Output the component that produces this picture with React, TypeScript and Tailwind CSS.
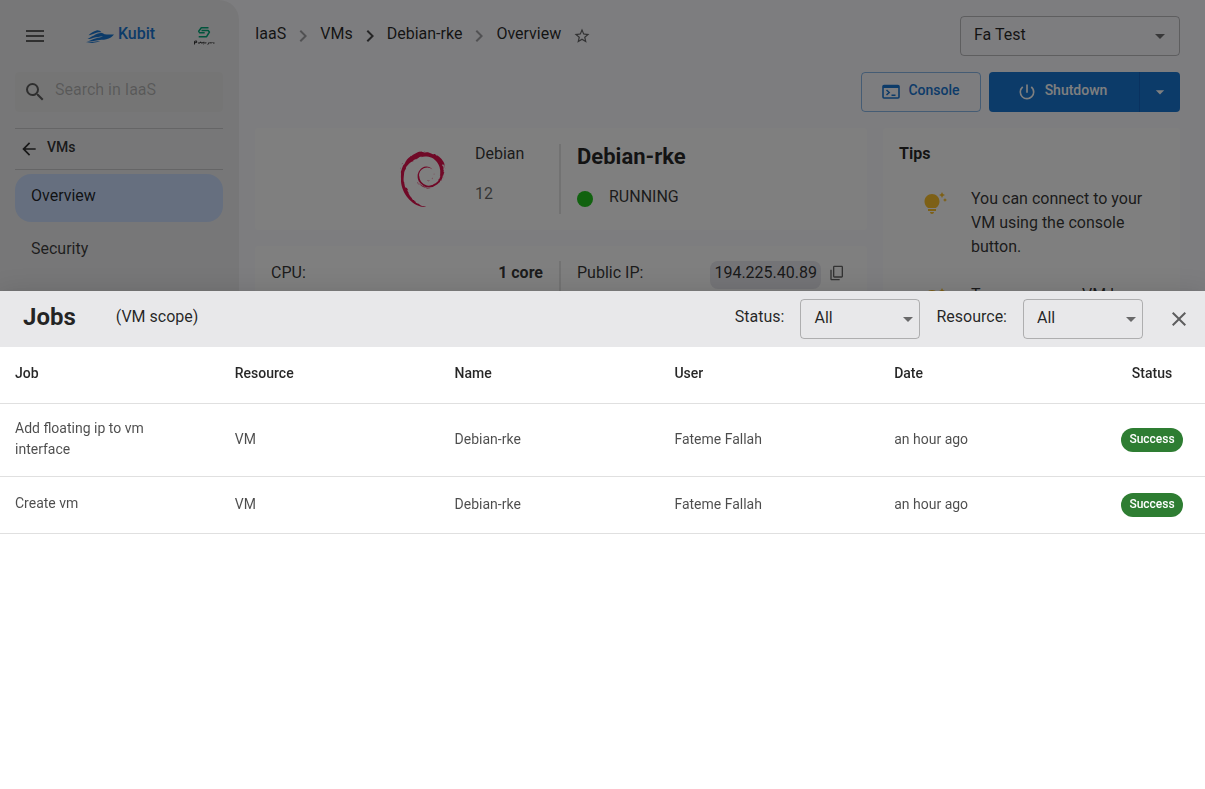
import { useState } from 'react';
import type { ReactNode } from 'react';
import clsx from 'clsx';
import {
  MdArrowBack,
  MdArrowDropDown,
  MdChevronRight,
  MdClose,
  MdContentCopy,
  MdMenu,
  MdPowerSettingsNew,
  MdSearch,
  MdStarOutline,
  MdTipsAndUpdates,
} from 'react-icons/md';
import { SiDebian } from 'react-icons/si';

const jobs = [
  { job: 'Add floating ip to vm interface', resource: 'VM', name: 'Debian-rke', user: 'Fateme Fallah', date: 'an hour ago', status: 'Success' },
  { job: 'Create vm', resource: 'VM', name: 'Debian-rke', user: 'Fateme Fallah', date: 'an hour ago', status: 'Success' },
];

const tips = [
  'You can connect to your VM using the console button.',
  'To access your VM by',
];

function BoatLogo() {
  return (
    <svg width="30" height="16" viewBox="0 0 30 16" fill="#1976d2" aria-hidden="true">
      {/* cabin */}
      <path d="M3.500 7.200C6.200 4.600 8.600 3 11.500 2.400c2.200-.3 3.900.4 5.100 1.900-2.600-.4-4.900.3-7.100 1.100-1.900.8-3.600 1.500-6 1.800z" />
      {/* hull */}
      <path d="M9 7.600c2.300-1.900 4.900-3 8-2.600 1.100.2 1.700.9 2.700 1.200 2.900.6 6.100.4 9.300.2-1.600 2.200-4.200 4-7.700 4.900-3.300.7-6 .5-8.800.9-3.700.6-6.300 1.500-11 1.500 3.300-1 6.200-2.700 9.700-3.500 2-.5 4.900-1 6.800-2-3.300.5-6.300.7-9.300 1.500-1.900.6-3.800 1.300-6.200 1.400C4.400 10.200 6.500 8.600 9 7.600z" />
      {/* wave */}
      <path d="M.6 14.700c5-.1 8-1.500 14.700-1.500-4.700 1.200-9.800 2.400-14.700 1.500z" />
    </svg>
  );
}

function PartnerLogo() {
  return (
    <svg width="22" height="20" viewBox="0 0 22 20" fill="none" aria-hidden="true">
      <path d="M15.500 1.800H8.300L5.700 5.300l1 1.500h5" stroke="#00a878" strokeWidth="1.500" strokeLinejoin="round" />
      <path d="M8.500 4.500h6.700l1.200 1.500-2.800 4.700H5.700" stroke="#00a878" strokeWidth="1.500" strokeLinejoin="round" />
      <path d="M1.500 18.500v-3.200l2-.4.300 1.500-2 .4M5 17h2l.6-1.200.4 1.200 2-.2.800-.9.500 1.400-1 .8M12 17l1.400-.2M14.500 18.300l1.200-.5.200-1.400M16.600 16.700l2 .3.800-.8M20 17h1.500" stroke="#222" strokeWidth=".9" />
    </svg>
  );
}

function ConsoleIcon() {
  return (
    <svg width="18" height="16" viewBox="0 0 18 16" fill="none" stroke="#1976d2" aria-hidden="true">
      <rect x="1" y="1.500" width="16" height="12.500" rx="1" strokeWidth="1.600" />
      <path d="M1 3h16" strokeWidth="2" />
      <path d="M4.500 6l2.700 2.500L4.500 11M9.500 11.200h4" strokeWidth="1.500" />
    </svg>
  );
}

type SelectBoxProps = {
  id: string;
  label?: string;
  options: string[];
  className: string;
  arrowClassName: string;
};

function SelectBox({ id, label, options, className, arrowClassName }: SelectBoxProps) {
  const [value, setValue] = useState(options[0]);

  return (
    <div className={clsx('relative', className)}>
      <select
        id={id}
        aria-label={label}
        value={value}
        onChange={(e) => setValue(e.target.value)}
        className="h-full w-full appearance-none rounded border border-black/25 bg-transparent px-[13px] pb-[3px] text-base text-black/85"
      >
        {options.map((option) => (
          <option key={option}>{option}</option>
        ))}
      </select>
      <MdArrowDropDown className={clsx('pointer-events-none absolute top-2 text-black/55', arrowClassName)} size={24} />
    </div>
  );
}

function Sidebar() {
  return (
    <aside className="w-[239px] shrink-0 rounded-tr-[20px] bg-[#efeff1] pt-4 pr-4 pl-[15px]">
      <div className="flex h-10 items-center justify-between px-2">
        <button aria-label="Menu" className="text-black/60">
          <MdMenu size={24} />
        </button>
        <a href="#kubit" className="flex items-center gap-[3px] text-[#1976d2]">
          <BoatLogo />
          <span className="pb-1 font-medium">Kubit</span>
        </a>
        <PartnerLogo />
      </div>

      <div className="mt-4 flex h-10 items-center gap-2 rounded bg-[#ebebeb] px-2">
        <MdSearch size={24} className="shrink-0 text-black/60" />
        <input
          type="search"
          aria-label="Search in IaaS"
          placeholder="Search in IaaS"
          className="min-w-0 flex-1 bg-transparent pb-1 outline-none placeholder:text-black/25"
        />
      </div>

      <div className="mt-4 border-y border-black/15">
        <a href="#vms" className="flex h-10 items-center gap-2 pl-1 text-sm font-medium text-black/80">
          <MdArrowBack size={20} />
          <span className="pb-1">VMs</span>
        </a>
      </div>

      <nav className="mt-1 flex flex-col gap-[5px]">
        <a href="#overview" className="flex h-12 items-center rounded-2xl bg-[#cddffe] px-4 pb-1 text-black/85">
          Overview
        </a>
        <a href="#security" className="flex h-12 items-center rounded-2xl px-4 pb-1 text-black/75">
          Security
        </a>
      </nav>
    </aside>
  );
}

function Card({ children, className }: { children: ReactNode; className?: string }) {
  return <section className={clsx('rounded bg-white p-4', className)}>{children}</section>;
}

function Breadcrumbs() {
  const items = ['IaaS', 'VMs', 'Debian-rke', 'Overview'];

  return (
    <nav aria-label="Breadcrumb" className="flex items-center pb-1 text-black/85">
      {items.map((item, i) => (
        <span key={item} className="flex items-center">
          {i > 0 && (
            <MdChevronRight size={24} className={clsx('mx-[5px] mt-1', i === 2 ? 'text-black/70' : 'text-black/35')} />
          )}
          <a href={`#${item}`}>{item}</a>
        </span>
      ))}
      <button aria-label="Add to favorites" className="mt-1 ml-3 text-black/60">
        <MdStarOutline size={18} />
      </button>
    </nav>
  );
}

function VmPage() {
  return (
    <main className="min-w-0 flex-1 pt-4 pr-[25px] pl-4">
      <div className="flex h-10 items-center justify-between">
        <Breadcrumbs />
        <SelectBox
          id="project"
          label="Project"
          options={['Fa Test']}
          className="h-10 w-[220px]"
          arrowClassName="right-2"
        />
      </div>

      <div className="mt-4 flex justify-end gap-2 text-sm">
        <button className="flex h-10 w-[120px] items-center justify-center gap-2 rounded border border-[#1976d2]/50 text-[#1976d2]">
          <ConsoleIcon />
          <span className="pb-1 font-medium">Console</span>
        </button>
        <div className="flex h-10 rounded bg-[#1976d2] text-white">
          <button className="flex w-[151px] items-center justify-center gap-2 border-r border-[#1565c0] pr-1">
            <MdPowerSettingsNew size={20} />
            <span className="pb-1 font-medium">Shutdown</span>
          </button>
          <button aria-label="More actions" className="flex w-10 items-center justify-center">
            <MdArrowDropDown size={20} />
          </button>
        </div>
      </div>

      <div className="mt-4 flex items-start gap-4">
        <div className="flex min-w-0 flex-1 flex-col gap-4">
          <Card className="grid h-[102px] grid-cols-2">
            <div className="flex items-start justify-end border-r-2 border-black/10">
              <SiDebian size={56} className="mt-[7px] text-[#e0134f]" />
              <div className="-mt-1 ml-6 w-[84px]">
                <p className="pt-0.5 text-black/80">Debian</p>
                <p className="mt-4 text-black/60">12</p>
              </div>
            </div>
            <div className="pl-4">
              <h1 className="text-[22px] leading-[26px] font-bold text-black/85">Debian-rke</h1>
              <p className="mt-[15px] flex items-center gap-4 text-black/80">
                <span className="mt-1 size-4 rounded-full bg-[#22c51f]" />
                RUNNING
              </p>
            </div>
          </Card>

          <Card className="grid h-[200px] grid-cols-2 pt-[15px]">
            <dl className="flex justify-between border-r-2 border-black/10 pr-4 text-black/80">
              <dt>CPU:</dt>
              <dd className="font-bold">1 core</dd>
            </dl>
            <dl className="flex items-start justify-between pr-1.5 pl-4 text-black/80">
              <dt>Public IP:</dt>
              <dd className="flex items-center gap-1">
                <span className="rounded-lg bg-[#e8e8ee] px-1 pb-1">194.225.40.89</span>
                <button aria-label="Copy IP" className="pb-1 pl-1 text-black/60">
                  <MdContentCopy size={16} className="-scale-x-100 rotate-180" />
                </button>
              </dd>
            </dl>
          </Card>
        </div>

        <Card className="h-[400px] w-[297px] shrink-0">
          <h2 className="leading-5 font-bold text-black/85">Tips</h2>
          <ul className="mt-[23px] flex flex-col gap-6">
            {tips.map((tip) => (
              <li key={tip} className="flex gap-6 pl-6 text-black/80">
                <MdTipsAndUpdates size={24} className="mt-[5px] shrink-0 text-[#fbc02d]" />
                <p>{tip}</p>
              </li>
            ))}
          </ul>
        </Card>
      </div>
    </main>
  );
}

function JobsDrawer() {
  return (
    <section
      role="dialog"
      aria-label="Jobs"
      className="fixed inset-x-0 top-[291px] bottom-0 overflow-auto bg-white shadow-[0_8px_10px_-5px_rgba(0,0,0,0.2),0_16px_24px_2px_rgba(0,0,0,0.14),0_6px_30px_5px_rgba(0,0,0,0.12)]"
    >
      <header className="flex h-14 items-center bg-[#e8e8ea] pr-[14px] pl-[23px] text-black/85">
        <h2 className="pb-1 text-2xl font-bold">Jobs</h2>
        <span className="ml-10 pb-1">(VM scope)</span>
        <div className="ml-auto flex items-center gap-4">
          <label htmlFor="status" className="pb-1">Status:</label>
          <SelectBox id="status" options={['All', 'Success', 'Failed']} className="h-10 w-[120px]" arrowClassName="right-0" />
          <label htmlFor="resource" className="pb-1">Resource:</label>
          <SelectBox id="resource" options={['All', 'VM', 'Volume']} className="h-10 w-[120px]" arrowClassName="right-0" />
        </div>
        <button aria-label="Close" className="ml-6 text-black/60">
          <MdClose size={24} />
        </button>
      </header>

      <table className="w-full table-fixed border-collapse text-left text-sm leading-[21px]">
        <thead>
          <tr className="h-14 border-b border-[#e0e0e0] text-black/85">
            {['Job', 'Resource', 'Name', 'User', 'Date'].map((title) => (
              <th key={title} className="px-[15px] pt-3.5 pb-4 font-medium">{title}</th>
            ))}
            <th className="w-[106px] px-[15px] pt-3.5 pb-4 text-center font-medium">Status</th>
          </tr>
        </thead>
        <tbody>
          {jobs.map((row) => (
            <tr key={row.job} className="h-[57px] border-b border-[#e0e0e0] text-black/70">
              <td className="pt-3.5 pr-14 pb-4 pl-[15px]">{row.job}</td>
              <td className="px-[15px]">{row.resource}</td>
              <td className="px-[15px]">{row.name}</td>
              <td className="px-[15px]">{row.user}</td>
              <td className="px-[15px]">{row.date}</td>
              <td className="text-center">
                <span className="inline-flex h-6 items-center rounded-full bg-[#2e7d32] px-2 pb-0.5 align-middle text-xs font-medium text-white">
                  {row.status}
                </span>
              </td>
            </tr>
          ))}
        </tbody>
      </table>
    </section>
  );
}

export default function App() {
  return (
    <div className="h-screen overflow-hidden font-[Roboto,sans-serif] text-base">
      <div className="flex h-full bg-[#fbfbff]">
        <Sidebar />
        <VmPage />
      </div>
      <div className="fixed inset-0 bg-black/50" />
      <JobsDrawer />
    </div>
  );
}
